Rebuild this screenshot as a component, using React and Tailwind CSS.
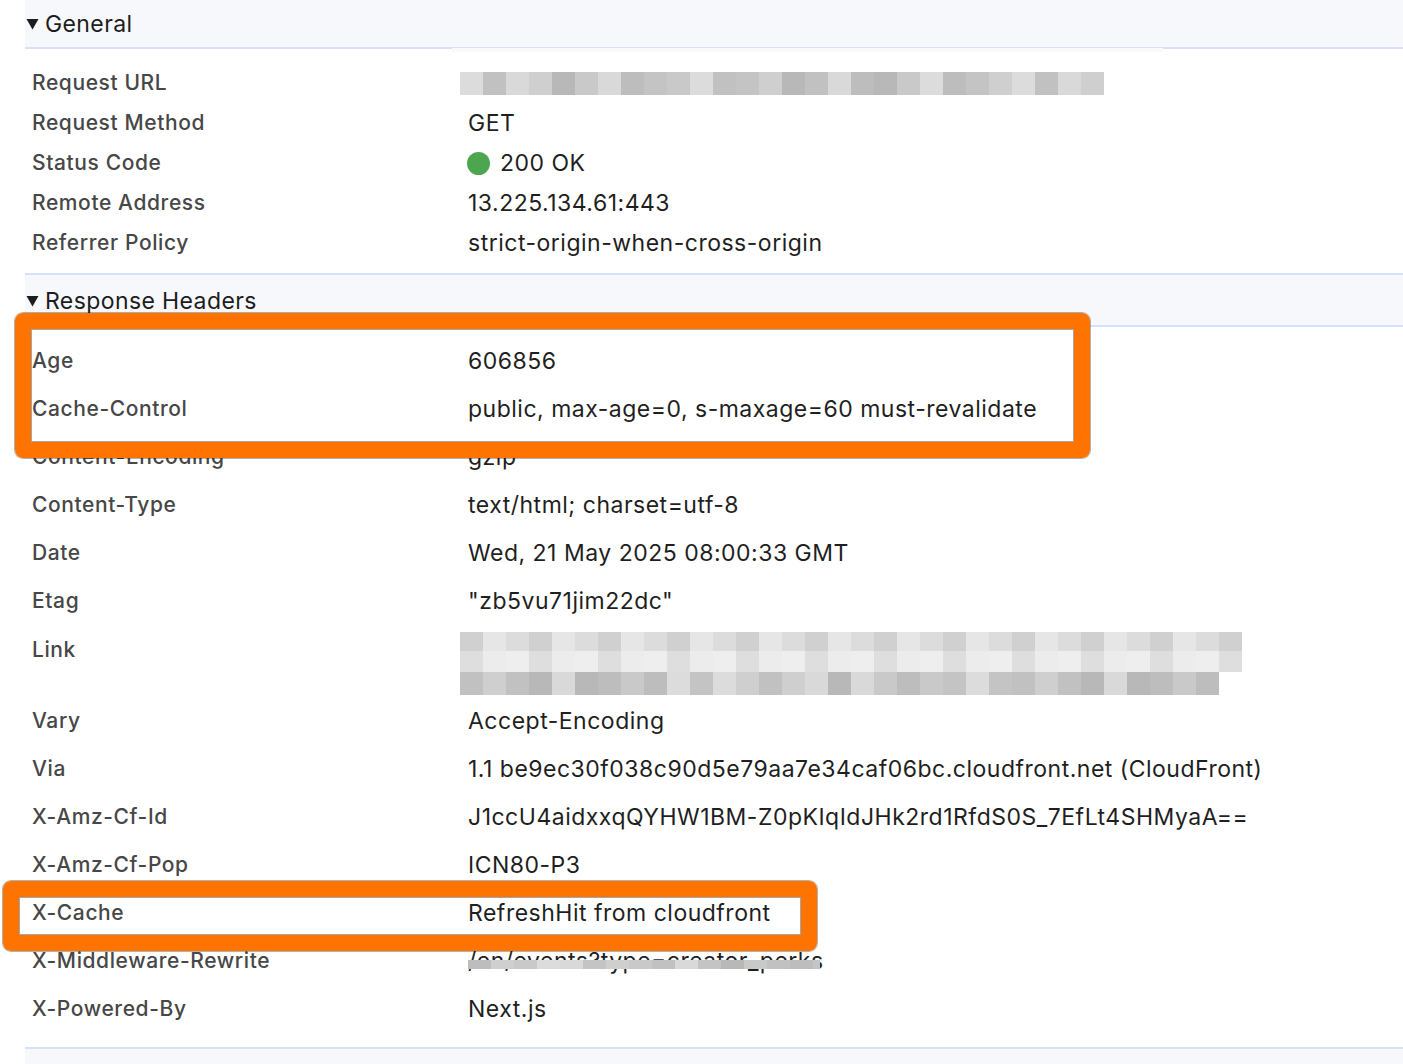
import React from 'react';

const font = { fontFamily: 'Inter, "Noto Sans", "Liberation Sans", sans-serif' };

// grey tones used for the blurred/pixelated values
const tones = ['#d9d9d9', '#bdbdbd', '#c4c4c4', '#cfcfcf', '#b8b8b8', '#c9c9c9', '#dcdcdc', '#c1c1c1'];
const lightTones = ['#f1f1f1', '#e4e4e4', '#ececec', '#e9e9e9', '#f3f3f3', '#dedede', '#eeeeee'];
const midTones = ['#d4d4d4', '#dadada', '#e2e2e2', '#d0d0d0', '#e6e6e6', '#dcdcdc', '#efefef'];

const Pixels = ({ count, palette, seed = 1, height = 'h-[23px]' }) => {
    const cells = [];
    for (let i = 0; i < count; i++) {
        const c = palette[(i * 7 + seed * 3 + (i % 3) * seed) % palette.length];
        cells.push(<div key={i} className={`w-[23px] shrink-0 ${height}`} style={{ background: c }} />);
    }
    return <div className="flex">{cells}</div>;
};

const Triangle = () => (
    <svg width="13" height="12" viewBox="0 0 13 12" className="mr-[6px]">
        <path d="M0.5 1 H12.5 L6.5 11.5 Z" fill="#1d1d1d" />
    </svg>
);

const labelCls = 'w-[468px] shrink-0 pl-[32px] text-[21px] font-medium text-[#474747] tracking-[0.6px]';
const valueCls = 'text-[23px] text-[#1f1f1f] tracking-[0.5px] whitespace-nowrap';

const Row = ({ label, children, h = 'h-[48px]' }) => (
    <div className={`flex items-center ${h}`}>
        <div className={labelCls}>{label}</div>
        <div className={valueCls}>{children}</div>
    </div>
);

const general = [
    ['Request Method', 'GET'],
    ['Status Code', null],
    ['Remote Address', '13.225.134.61:443'],
    ['Referrer Policy', 'strict-origin-when-cross-origin'],
];

const response1 = [
    ['Age', '606856'],
    ['Cache-Control', 'public, max-age=0, s-maxage=60 must-revalidate'],
    ['Content-Encoding', 'gzip'],
    ['Content-Type', 'text/html; charset=utf-8'],
    ['Date', 'Wed, 21 May 2025 08:00:33 GMT'],
    ['Etag', '"zb5vu71jim22dc"'],
];

const response2 = [
    ['Vary', 'Accept-Encoding'],
    ['Via', '1.1 be9ec30f038c90d5e79aa7e34caf06bc.cloudfront.net (CloudFront)'],
    ['X-Amz-Cf-Id', 'J1ccU4aidxxqQYHW1BM-Z0pKIqIdJHk2rd1RfdS0S_7EfLt4SHMyaA=='],
    ['X-Amz-Cf-Pop', 'ICN80-P3'],
    ['X-Cache', 'RefreshHit from cloudfront'],
];

export default function App() {
    return (
        <div className="relative w-full h-[1064px] overflow-hidden bg-white" style={font}>
            {/* General */}
            <div className="ml-[25px] h-[49px] bg-[#f7f8fb] border-b-2 border-[#d6e2fb] flex items-center pl-[1px] pt-[1px] text-[23px] tracking-[0.4px] text-[#1d1d1d]">
                <Triangle />
                <span>General</span>
            </div>
            <div className="pt-[14px] pb-[10px]">
                <div className="flex items-center h-[40px] relative">
                    <div className={labelCls}>Request URL</div>
                    <div className="absolute left-[452px] top-[-15px] flex">
                        <div className="w-[711px] h-[4px] bg-[#f9f9fa]" />
                    </div>
                    <div className="ml-[-8px]">
                        <Pixels count={28} palette={tones} seed={2} />
                    </div>
                </div>
                {general.map(([l, v]) => (
                    <Row key={l} label={l} h="h-[40px]">
                        {v === null ? (
                            <span className="flex items-center">
                                <span className="inline-block w-[23px] h-[23px] rounded-full bg-[#4ca650] ml-[-1px] mr-[10px]" />
                                200 OK
                            </span>
                        ) : v}
                    </Row>
                ))}
            </div>

            {/* Response Headers */}
            <div className="ml-[25px] h-[54px] bg-[#f7f8fb] border-y-2 border-[#d6e2fb] flex items-center pl-[1px] pt-[2px] text-[23px] tracking-[0.4px] text-[#1d1d1d]">
                <Triangle />
                <span>Response Headers</span>
            </div>
            <div className="pt-[10px] pb-[14px]">
                {response1.map(([l, v]) => (
                    <Row key={l} label={l}>{v}</Row>
                ))}
                <div className="flex h-[72px]">
                    <div className={`${labelCls} pt-[9px]`}>Link</div>
                    <div className="ml-[-8px] pt-[7px]">
                        <Pixels count={34} palette={midTones} seed={1} height="h-[19px]" />
                        <Pixels count={34} palette={lightTones} seed={4} height="h-[21px]" />
                        <Pixels count={33} palette={tones} seed={5} height="h-[23px]" />
                    </div>
                </div>
                {response2.map(([l, v]) => (
                    <Row key={l} label={l}>{v}</Row>
                ))}
                <div className="flex items-center h-[48px]">
                    <div className={labelCls}>X-Middleware-Rewrite</div>
                    <div className={`${valueCls} relative`}>
                        /en/events?type=creator_perks
                        <div className="absolute left-0 top-[16px] w-[352px] overflow-hidden">
                            <Pixels count={16} palette={tones} seed={3} height="h-[9px]" />
                        </div>
                    </div>
                </div>
                <Row label="X-Powered-By">Next.js</Row>
            </div>
            <div className="ml-[25px] h-[40px] bg-[#f7f8fb] border-t-2 border-[#d6e2fb]" />

            {/* highlight boxes */}
            <div className="absolute left-[15px] top-[313px] w-[1075px] h-[145px] border-[16px] border-[#ff7300] rounded-[8px] shadow-[0_0_0_1px_rgba(0,0,0,0.3),inset_0_0_0_1px_rgba(0,0,0,0.35)]" />
            <div className="absolute left-[3px] top-[881px] w-[814px] h-[70px] border-[16px] border-[#ff7300] rounded-[8px] shadow-[0_0_0_1px_rgba(0,0,0,0.3),inset_0_0_0_1px_rgba(0,0,0,0.35)]" />
        </div>
    );
}
